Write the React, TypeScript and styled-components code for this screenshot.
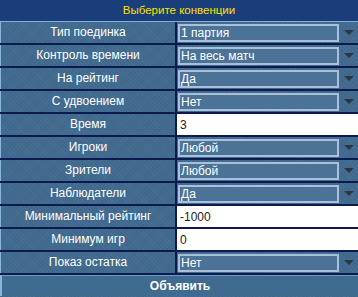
import React from 'react';
import styled, { createGlobalStyle } from 'styled-components';

const GlobalStyle = createGlobalStyle`
  body {
    margin: 0;
    background: #416b90;
    font-family: "Liberation Sans", Arial, sans-serif;
  }
`;

const StyledPanel = styled.div`
  width: 358px;
  height: 297px;
  overflow: hidden;
  background-color: #416b90;
  background-image:
    repeating-linear-gradient(45deg, rgba(255, 255, 255, 0.035) 0 1px, transparent 1px 3px),
    repeating-linear-gradient(-45deg, rgba(0, 0, 0, 0.04) 0 1px, transparent 1px 2px);
  font-size: 12px;
`;

const StyledHeader = styled.div`
  height: 21px;
  line-height: 21px;
  background: #1a3e7a;
  color: #ffe000;
  font-size: 11.5px;
  text-align: center;
  border-bottom: 1px solid #7fb0da;
`;

const StyledRow = styled.div`
  display: grid;
  grid-template-columns: 177px 1fr;
  height: 21px;
  border-bottom: 2px solid #0c1a50;
`;

const StyledLabel = styled.div`
  border-left: 1px solid #86b6de;
  border-right: 2px solid #0c1a50;
  color: #fff;
  text-align: center;
  line-height: 21px;
  white-space: nowrap;
`;

const StyledCell = styled.div<{ $input?: boolean }>`
  display: flex;
  align-items: center;
  background: ${(p) => (p.$input ? '#fff' : 'transparent')};
  padding-left: ${(p) => (p.$input ? '3px' : '1px')};
  color: ${(p) => (p.$input ? '#222' : '#fff')};
`;

const StyledSelect = styled.div`
  flex: 1;
  height: 14px;
  line-height: 14px;
  border: 2px solid #a9c0d8;
  background: #4b7398;
  padding-left: 1px;
  white-space: nowrap;
`;

const StyledArrow = styled.div`
  width: 19px;
  display: flex;
  justify-content: center;
  align-items: center;
  &::after {
    content: '';
    border-left: 5px solid transparent;
    border-right: 5px solid transparent;
    border-top: 5px solid #2c3640;
  }
`;

const StyledButton = styled.div`
  height: 20px;
  line-height: 20px;
  border-top: 1px solid #6d9cc4;
  border-left: 2px solid #86b6de;
  color: #fff;
  font-weight: 700;
  text-align: center;
  background: #3f6b91;
`;

type Field = { label: string; value: string; kind: 'select' | 'input' };

const fields: Field[] = [
  { label: 'Тип поединка', value: '1 партия', kind: 'select' },
  { label: 'Контроль времени', value: 'На весь матч', kind: 'select' },
  { label: 'На рейтинг', value: 'Да', kind: 'select' },
  { label: 'С удвоением', value: 'Нет', kind: 'select' },
  { label: 'Время', value: '3', kind: 'input' },
  { label: 'Игроки', value: 'Любой', kind: 'select' },
  { label: 'Зрители', value: 'Любой', kind: 'select' },
  { label: 'Наблюдатели', value: 'Да', kind: 'select' },
  { label: 'Минимальный рейтинг', value: '-1000', kind: 'input' },
  { label: 'Минимум игр', value: '0', kind: 'input' },
  { label: 'Показ остатка', value: 'Нет', kind: 'select' },
];

export default function App() {
  return (
    <StyledPanel>
      <GlobalStyle />
      <StyledHeader>Выберите конвенции</StyledHeader>
      {fields.map((f) => (
        <StyledRow key={f.label}>
          <StyledLabel>{f.label}</StyledLabel>
          {f.kind === 'select' ? (
            <StyledCell>
              <StyledSelect>{f.value}</StyledSelect>
              <StyledArrow />
            </StyledCell>
          ) : (
            <StyledCell $input>{f.value}</StyledCell>
          )}
        </StyledRow>
      ))}
      <StyledButton>Объявить</StyledButton>
    </StyledPanel>
  );
}
